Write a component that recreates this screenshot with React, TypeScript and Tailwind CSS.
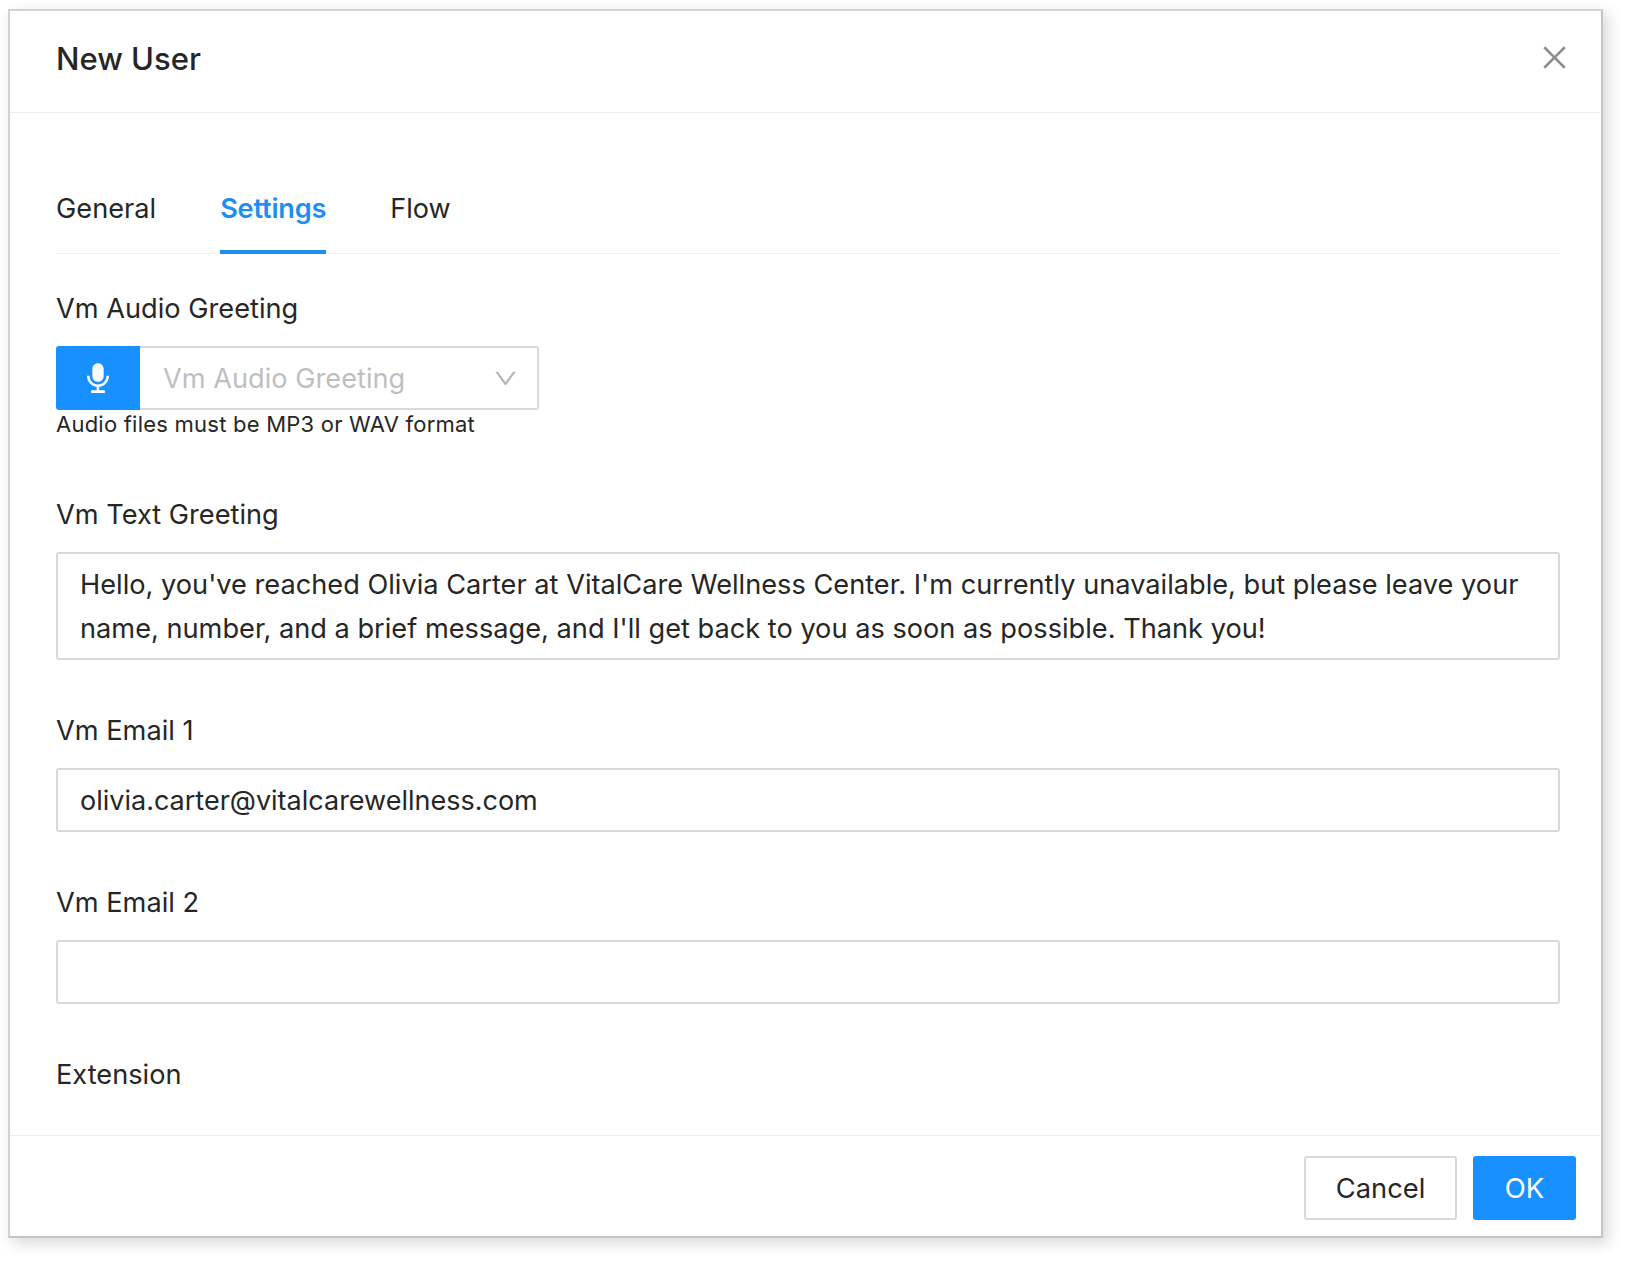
import { AiFillAudio, AiOutlineClose, AiOutlineDown } from "react-icons/ai";

function Label({ text, className }: { text: string; className: string }) {
  return <p className={"h-9 text-[27.2px] leading-9 text-[#262626] " + className}>{text}</p>;
}

export default function App() {
  const font = { fontFamily: "Inter, 'Liberation Sans', sans-serif" };
  return (
    <div className="w-[1628px] h-[1262px] bg-white pt-[9px] pl-[8px]" style={font}>
      <div className="w-[1595px] h-[1229px] flex flex-col bg-white border-2 border-[#d2d2d2] border-r-[#c4c4c4] border-b-[#c4c4c4] shadow-[5px_5px_14px_rgba(0,0,0,0.16)] overflow-hidden">
        {/* header */}
        <div className="h-[102px] shrink-0 flex items-center justify-between pl-[46px] pr-[30px] pb-[4px] border-b border-[#eeeeee]">
          <h1 className="text-[31px] font-medium text-[#262626]">New User</h1>
          <AiOutlineClose className="w-[33px] h-[33px] mb-[4px] text-[#8c8c8c]" />
        </div>

        {/* body */}
        <div className="flex-1 min-h-0 overflow-hidden pl-[46px] pr-[41px]">
          <div className="flex gap-[64px] mt-[76px] h-[65px] border-b border-[#eeeeee] text-[27.2px] leading-10 text-[#262626]">
            <span className="h-[65px]">General</span>
            <span className="h-[65px] font-semibold tracking-[-0.2px] text-[#1e8fef] border-b-4 border-[#1e8fef]">Settings</span>
            <span className="h-[65px] text-[27px]">Flow</span>
          </div>

          <Label text="Vm Audio Greeting" className="mt-[37px]" />
          <div className="flex mt-[19px] w-[483px] h-[64px]">
            <div className="w-[84px] flex items-center justify-center bg-[#1890ff] rounded-l-[3px]">
              <AiFillAudio className="w-[34px] h-[34px] text-white" />
            </div>
            <div className="flex-1 flex items-center justify-between pl-[23px] pr-[18px] border-2 border-l-0 border-[#d9d9d9] rounded-r-[3px]">
              <span className="pt-[2px] text-[27.2px] text-[#bfbfbf]">Vm Audio Greeting</span>
              <AiOutlineDown className="w-[27px] h-[27px] text-[#b3b3b3]" />
            </div>
          </div>
          <p className="h-7 text-[22px] leading-7 tracking-[0.23px] text-[#262626]">Audio files must be MP3 or WAV format</p>

          <Label text="Vm Text Greeting" className="mt-[59px]" />
          <div className="mt-[19px] h-[108px] px-[22px] py-[9px] border-2 border-[#d9d9d9] rounded-[3px] text-[27.2px] leading-[44px] text-[#262626]">
            Hello, you've reached Olivia Carter at VitalCare Wellness Center. I'm currently unavailable, but please leave your name, number, and a brief message, and I'll get back to you as soon as possible. Thank you!
          </div>

          <Label text="Vm Email 1" className="mt-[53px]" />
          <div className="mt-[19px] h-[64px] flex items-center px-[22px] pt-[2px] border-2 border-[#d9d9d9] rounded-[3px] text-[27px] text-[#262626]">
            olivia.carter@vitalcarewellness.com
          </div>

          <Label text="Vm Email 2" className="mt-[53px]" />
          <div className="mt-[19px] h-[64px] border-2 border-[#d9d9d9] rounded-[3px]" />

          <Label text="Extension" className="mt-[53px]" />
        </div>

        {/* footer */}
        <div className="h-[101px] shrink-0 flex items-start justify-end gap-[16px] pt-[20px] pr-[25px] border-t border-[#eeeeee]">
          <button className="w-[153px] h-[64px] pt-[2px] border-2 border-[#d9d9d9] rounded-[3px] bg-white text-[27.3px] text-[#262626]">Cancel</button>
          <button className="w-[103px] h-[64px] pt-[2px] rounded-[3px] bg-[#1890ff] text-[27.5px] text-white">OK</button>
        </div>
      </div>
    </div>
  );
}
